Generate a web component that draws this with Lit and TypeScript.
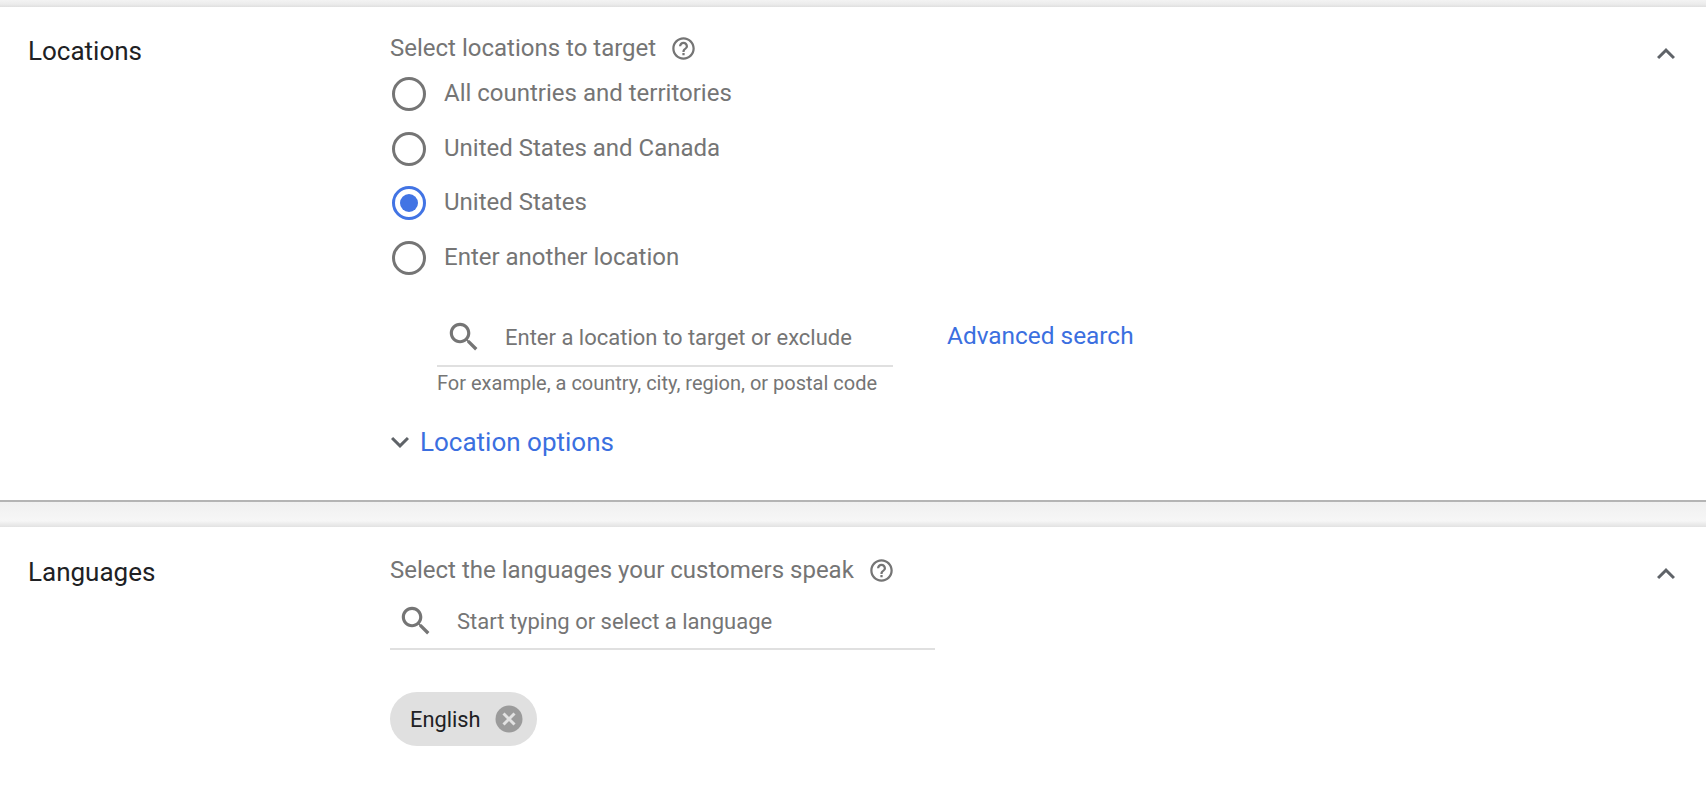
import { LitElement, html, css, svg } from "lit";
import { customElement } from "lit/decorators.js";

const help = html`<svg class="help" viewBox="0 0 24 24" width="27" height="27"><path fill="#757575" d="M11 18h2v-2h-2v2zm1-16C6.48 2 2 6.48 2 12s4.48 10 10 10 10-4.48 10-10S17.52 2 12 2zm0 18c-4.41 0-8-3.59-8-8s3.59-8 8-8 8 3.59 8 8-3.59 8-8 8zm0-14c-2.21 0-4 1.79-4 4h2c0-1.1.9-2 2-2s2 .9 2 2c0 2-3 1.75-3 5h2c0-2.25 3-2.5 3-5 0-2.21-1.79-4-4-4z"/></svg>`;
const search = html`<svg viewBox="0 0 24 24" width="38" height="38"><path fill="#757575" d="M15.5 14h-.79l-.28-.27C15.41 12.59 16 11.11 16 9.5 16 5.91 13.09 3 9.5 3S3 5.91 3 9.5 5.91 16 9.5 16c1.61 0 3.09-.59 4.23-1.57l.27.28v.79l5 4.99L20.49 19l-4.99-5zm-6 0C7.01 14 5 11.99 5 9.5S7.01 5 9.5 5 14 7.01 14 9.5 11.99 14 9.5 14z"/></svg>`;
const chevUp = html`<svg class="chev" viewBox="0 0 24 24" width="36" height="36"><path fill="#5f6368" d="M12 8l-6 6 1.41 1.41L12 10.83l4.59 4.58L18 14z"/></svg>`;
const chevDown = html`<svg viewBox="0 0 24 24" width="36" height="36"><path fill="#5f6368" d="M16.59 8.59L12 13.17 7.41 8.59 6 10l6 6 6-6z"/></svg>`;
const closeIcon = svg`<svg viewBox="0 0 28 28" width="28" height="28"><circle cx="14" cy="14" r="13.5" fill="#9b9b9b"/><path d="M8.5 8.5l11 11M19.5 8.5l-11 11" stroke="#e2e2e2" stroke-width="3" fill="none"/></svg>`;

@customElement("app-root")
export class AppRoot extends LitElement {
  static styles = css`
    :host { display: block; height: 810px; overflow: hidden; background: #fff; font-family: Roboto, sans-serif; }
    .band.top { height: 7px; background: linear-gradient(#f3f3f3, #ececec 60%, #dfdfdf); }
    .band.mid { height: 27px; box-sizing: border-box; border-top: 2px solid #b4b4b4; background: linear-gradient(#f0f0f0, #f6f6f6 75%, #e2e2e2); }
    .panel { display: grid; grid-template-columns: 390px 1fr 36px; padding-right: 22px; }
    .panel.loc { height: 493px; padding-top: 24px; box-sizing: border-box; }
    .panel.lang { padding-top: 24px; box-sizing: border-box; }
    .name { padding-left: 28px; font-size: 26px; line-height: 36px; color: #202124; }
    .loc .name { padding-top: 2px; }
    .lang .name { padding-top: 3px; }
    .chev { display: block; margin-top: 5px; }
    .head { display: flex; align-items: center; gap: 14px; font-size: 24px; line-height: 34px; color: #757575; }
    .lang .head { position: relative; top: 2px; }
    .radios { display: flex; flex-direction: column; margin-top: 2px; }
    .radio { display: flex; align-items: center; height: 54.5px; gap: 18px; padding-left: 2px; font-size: 24px; color: #757575; }
    .radio span:last-child { position: relative; top: -1px; }
    .dot { width: 34px; height: 34px; box-sizing: border-box; border: 3px solid #757575; border-radius: 50%; flex: none; }
    .dot.on { border-color: #4274e4; display: flex; align-items: center; justify-content: center; }
    .dot.on::after { content: ""; width: 18px; height: 18px; border-radius: 50%; background: #4274e4; }
    .where { display: flex; margin-left: 47px; margin-top: 22px; gap: 54px; }
    .field { display: flex; align-items: center; gap: 22px; border-bottom: 2px solid #e0e0e0; height: 60px; box-sizing: border-box; color: #757575; font-size: 22px; padding-left: 8px; }
    .field.a { width: 456px; padding-top: 2px; }
    .field.b { width: 545px; margin-top: 5px; padding-left: 7px; padding-top: 4px; }
    .hint { font-size: 20px; color: #757575; line-height: 24px; margin-top: 4px; }
    .link { color: #3b6fe0; }
    .adv { margin-top: 14px; font-size: 24.4px; line-height: 30px; }
    .opts { display: flex; align-items: center; gap: 2px; margin-top: 29px; margin-left: -8px; }
    .opts .link { font-size: 26px; line-height: 36px; }
    .chip { display: inline-flex; align-items: center; gap: 14px; height: 54px; margin-top: 42px; border-radius: 27px; background: #e0e0e0; padding: 0 14px 0 20px; font-size: 21.8px; color: #202124; }
  `;
  render() {
    const opts = ["All countries and territories", "United States and Canada", "United States", "Enter another location"];
    return html`
      <div class="band top"></div>
      <section class="panel loc">
        <div class="name">Locations</div>
        <div>
          <div class="head"><span>Select locations to target</span>${help}</div>
          <div class="radios">
            ${opts.map((o, i) => html`<div class="radio"><span class="dot ${i === 2 ? "on" : ""}"></span><span>${o}</span></div>`)}
          </div>
          <div class="where">
            <div>
              <div class="field a">${search}<span>Enter a location to target or exclude</span></div>
              <div class="hint">For example, a country, city, region, or postal code</div>
            </div>
            <div class="link adv">Advanced search</div>
          </div>
          <div class="opts">${chevDown}<span class="link">Location options</span></div>
        </div>
        ${chevUp}
      </section>
      <div class="band mid"></div>
      <section class="panel lang">
        <div class="name">Languages</div>
        <div>
          <div class="head"><span>Select the languages your customers speak</span>${help}</div>
          <div class="field b">${search}<span>Start typing or select a language</span></div>
          <div class="chip"><span>English</span>${closeIcon}</div>
        </div>
        ${chevUp}
      </section>
    `;
  }
}
